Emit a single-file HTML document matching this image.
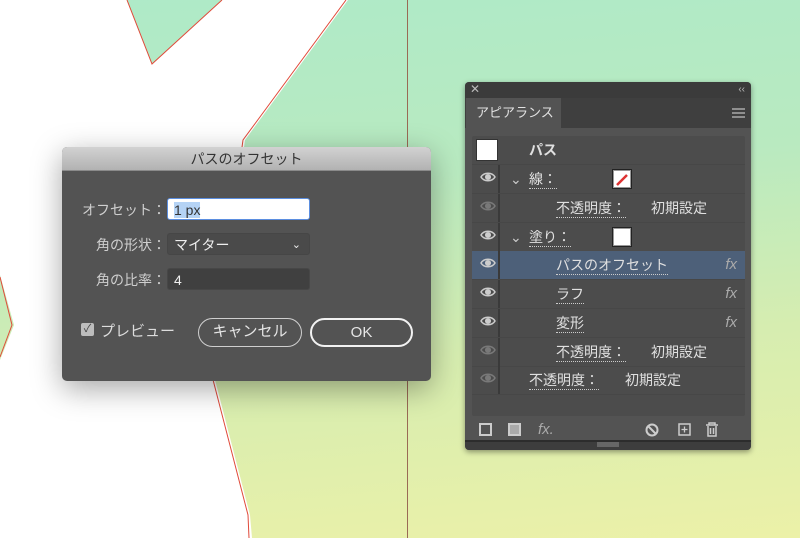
<!DOCTYPE html>
<html><head><meta charset="utf-8"><style>
*{margin:0;padding:0;box-sizing:border-box}
body{width:800px;height:538px;overflow:hidden;position:relative;font-family:"Liberation Sans","Noto Sans CJK JP",sans-serif;background:linear-gradient(175deg,#aeeac8 0%,#b9eac0 35%,#d6edb0 65%,#ecf1a8 100%)}
.abs{position:absolute}
.dlg{left:62px;top:147px;width:369px;height:234px;background:#535353;border-radius:5px;box-shadow:0 8px 30px rgba(0,0,0,.35);overflow:hidden}
.dt{height:24px;background:linear-gradient(#d2d2d2,#b2b2b2);text-align:center;font-size:14px;line-height:24px;color:#333;border-bottom:1px solid #8a8a8a}
.lbl{font-size:14px;color:#cfcfcf;text-align:right;width:104px;left:0}
.fld{left:105px;width:143px;height:22px;border-radius:3px;font-size:14px;line-height:22px;padding-left:6px;color:#eee}
.btn{height:29px;border-radius:15px;text-align:center;font-size:15px;line-height:26px;color:#e6e6e6}
.p{left:465px;top:82px;width:286px;height:368px;background:#535353;border-radius:4px;overflow:hidden;box-shadow:0 2px 6px rgba(0,0,0,.4)}
.row{position:absolute;left:7px;width:273px;height:29px;border-bottom:1px solid #474747;font-size:14px;color:#e0e0e0;line-height:28px}
.eye{position:absolute;left:0;top:0;width:28px;height:28px;border-right:2px solid #3a3a3a}
.t{position:absolute;border-bottom:1px dotted #ccc;line-height:18px;top:5px}
.fx{position:absolute;right:8px;font-style:italic;color:#aaa;font-size:15px}
</style></head><body>
<svg class="abs" style="left:0;top:0" width="800" height="538">
<polygon points="0,0 127,0 152,64 222,0 348,0 245,140 213,372 250,515 252,538 0,538 0,360 14,325 0,275" fill="#fff"/>
<polyline points="127,0 152,64 222,0" fill="none" stroke="#e04a3a" stroke-width="1"/>
<polyline points="346,0 243,140 211,372 248,515 249,538" fill="none" stroke="#e04a3a" stroke-width="1"/>
<polyline points="0,277 12,325 0,357" fill="none" stroke="#e04a3a" stroke-width="1"/>
<line x1="407.5" y1="0" x2="407.5" y2="538" stroke="#9a6a55" stroke-width="1"/>
</svg>
<div class="abs dlg">
<div class="dt">パスのオフセット</div>
<div class="abs lbl" style="top:53px">オフセット：</div>
<div class="abs fld" style="top:51px;background:#fff;border:1px solid #5b8ee0;color:#333"><span style="background:#b5d3f5">1 px</span></div>
<div class="abs lbl" style="top:88px">角の形状：</div>
<div class="abs fld" style="top:86px;background:#4a4a4a;border:1px solid #464646">マイター<span style="position:absolute;right:8px;font-size:11px">⌄</span></div>
<div class="abs lbl" style="top:123px">角の比率：</div>
<div class="abs fld" style="top:121px;background:#404040;border:1px solid #474747">4</div>
<div class="abs" style="left:19px;top:176px;width:13px;height:13px;background:#bdbdbd;border-radius:2px;color:#444;font-size:11px;line-height:13px;text-align:center">✓</div>
<div class="abs" style="left:38px;top:173px;font-size:15px;color:#ddd">プレビュー</div>
<div class="abs btn" style="left:136px;top:171px;width:104px;border:1.5px solid #cfcfcf">キャンセル</div>
<div class="abs btn" style="left:248px;top:171px;width:103px;border:2.5px solid #f2f2f2">OK</div>
</div>
<div class="abs p">
<div class="abs" style="left:0;top:0;width:286px;height:16px;background:#3b3b3b;color:#bbb;font-size:12px;line-height:15px"><span style="margin-left:5px">✕</span><span style="position:absolute;right:6px;font-size:10px">‹‹</span></div>
<div class="abs" style="left:0;top:16px;width:286px;height:30px;background:#3f3f3f"></div>
<div class="abs" style="left:1px;top:16px;width:95px;height:30px;background:#535353;color:#e2e2e2;font-size:13px;line-height:30px;padding-left:10px">アピアランス</div>
<svg class="abs" style="right:6px;top:26px" width="13" height="10"><path d="M0 1h13M0 5h13M0 9h13" stroke="#aaa" stroke-width="1.6"/></svg>
<div class="abs" style="left:7px;top:54px;width:273px;height:280px;background:#4c4c4c;border-radius:2px"></div>
<div class="row" style="top:54px"><div class="abs" style="left:4px;top:3px;width:22px;height:22px;background:#fff;border:1px solid #333"></div><b style="position:absolute;left:57px">パス</b></div>
<div class="row" style="top:83px"><div class="eye"></div><span class="abs" style="left:38px;color:#ccc">⌄</span><span class="t" style="left:57px">線：</span><div class="abs" style="left:140px;top:4px;width:20px;height:20px;border:1px solid #222;background:#fff;box-shadow:inset 0 0 0 1px #999"><svg width="18" height="18"><line x1="4" y1="14" x2="14" y2="4" stroke="#d33" stroke-width="2.5"/></svg></div></div>
<div class="row" style="top:112px"><div class="eye"></div><span class="t" style="left:84px">不透明度：</span><span class="abs" style="left:179px">初期設定</span></div>
<div class="row" style="top:141px"><div class="eye"></div><span class="abs" style="left:38px;color:#ccc">⌄</span><span class="t" style="left:57px">塗り：</span><div class="abs" style="left:140px;top:4px;width:20px;height:20px;border:1px solid #222;background:#fff;box-shadow:inset 0 0 0 1px #999"></div></div>
<div class="row" style="top:169px;background:#4d6079"><div class="eye"></div><span class="t" style="left:84px">パスのオフセット</span><span class="fx">fx</span></div>
<div class="row" style="top:198px"><div class="eye"></div><span class="t" style="left:84px">ラフ</span><span class="fx">fx</span></div>
<div class="row" style="top:227px"><div class="eye"></div><span class="t" style="left:84px">変形</span><span class="fx">fx</span></div>
<div class="row" style="top:256px"><div class="eye"></div><span class="t" style="left:84px">不透明度：</span><span class="abs" style="left:179px">初期設定</span></div>
<div class="row" style="top:284px"><div class="eye"></div><span class="t" style="left:57px">不透明度：</span><span class="abs" style="left:153px">初期設定</span></div>
<svg class="abs" style="left:0;top:335px" width="286" height="33">
<rect x="15" y="7" width="11" height="11" fill="none" stroke="#ccc" stroke-width="2"/>
<rect x="44" y="7" width="11" height="11" fill="#aaa" stroke="#ccc" stroke-width="2"/>
<text x="73" y="17" fill="#aaa" font-family="Liberation Sans" font-style="italic" font-size="15">fx.</text>
<circle cx="187" cy="13" r="5.5" fill="none" stroke="#ccc" stroke-width="2"/><line x1="183" y1="9" x2="191" y2="17" stroke="#ccc" stroke-width="2"/>
<rect x="214" y="7" width="11" height="11" fill="none" stroke="#ccc" stroke-width="1.5"/><path d="M219.5 9.5v6M216.5 12.5h6" stroke="#ccc" stroke-width="1.3"/>
<path d="M241 8h12M244 8v-2h6v2M243 9v10h8V9M245.5 11v6M248.5 11v6" fill="none" stroke="#ccc" stroke-width="1.5"/>
<rect x="0" y="23" width="286" height="10" fill="#3d3d3d"/><rect x="0" y="23" width="286" height="2" fill="#2c2c2c"/>
<rect x="132" y="25" width="22" height="5" fill="#666"/>
</svg>
<svg class="abs" style="left:15px;top:87px" width="16" height="290">
<g fill="none" stroke="#ccc" stroke-width="1.5">
<g><path d="M1 8c3-5 11-5 14 0c-3 5-11 5-14 0z"/><circle cx="8" cy="8" r="2.3" fill="#ccc"/></g>
<g transform="translate(0,29)" opacity=".35"><path d="M1 8c3-5 11-5 14 0c-3 5-11 5-14 0z"/><circle cx="8" cy="8" r="2.3" fill="#ccc"/></g>
<g transform="translate(0,58)"><path d="M1 8c3-5 11-5 14 0c-3 5-11 5-14 0z"/><circle cx="8" cy="8" r="2.3" fill="#ccc"/></g>
<g transform="translate(0,86)"><path d="M1 8c3-5 11-5 14 0c-3 5-11 5-14 0z"/><circle cx="8" cy="8" r="2.3" fill="#ccc"/></g>
<g transform="translate(0,115)"><path d="M1 8c3-5 11-5 14 0c-3 5-11 5-14 0z"/><circle cx="8" cy="8" r="2.3" fill="#ccc"/></g>
<g transform="translate(0,144)"><path d="M1 8c3-5 11-5 14 0c-3 5-11 5-14 0z"/><circle cx="8" cy="8" r="2.3" fill="#ccc"/></g>
<g transform="translate(0,173)" opacity=".35"><path d="M1 8c3-5 11-5 14 0c-3 5-11 5-14 0z"/><circle cx="8" cy="8" r="2.3" fill="#ccc"/></g>
<g transform="translate(0,201)" opacity=".35"><path d="M1 8c3-5 11-5 14 0c-3 5-11 5-14 0z"/><circle cx="8" cy="8" r="2.3" fill="#ccc"/></g>
</g></svg>
</div>
</body></html>
